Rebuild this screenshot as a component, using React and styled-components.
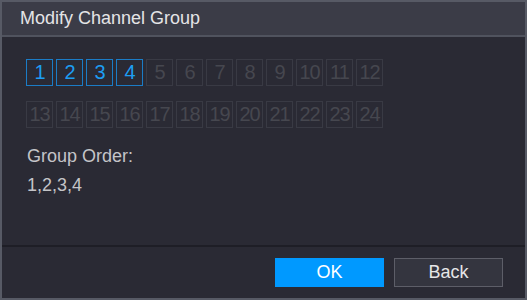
import React from 'react'
import styled, { createGlobalStyle } from 'styled-components';

const Global = createGlobalStyle`
  body {
    margin: 0;
    background: #2a2a34;
    font-family: "Liberation Sans", Arial, sans-serif;
  }
`;

const channels = Array.from({ length: 24 }, (_, i) => i + 1);
const selected = [1, 2, 3, 4];

export default function App() {
  return (
    <>
      <Global />
      <Dialog>
        <TitleBar>Modify Channel Group</TitleBar>
        <Body>
          <Grid>
            {channels.map(n => (
              <Cell key={n} $active={selected.includes(n)}>{n}</Cell>
            ))}
          </Grid>
          <Label>Group Order:</Label>
          <Order>{selected.join(',')}</Order>
        </Body>
        <Footer>
          <Button $primary>OK</Button>
          <Button>Back</Button>
        </Footer>
      </Dialog>
    </>
  )
}

const Dialog = styled.div`
  box-sizing: border-box;
  width: 527px;
  height: 300px;
  border: 2px solid #575a65;
  background: #2a2a34;
  display: flex;
  flex-direction: column;
`;

const TitleBar = styled.div`
  height: 33px;
  background: #3b3c47;
  border-bottom: 2px solid #50535e;
  color: #e4e4e6;
  font-size: 18px;
  line-height: 33px;
  padding-left: 18px;
`;

const Body = styled.div`
  flex: 1;
  padding: 22px 0 0 24px;
  border-bottom: 2px solid #1e1e26;
`;

const Grid = styled.div`
  display: grid;
  grid-template-columns: repeat(12, 27px);
  grid-auto-rows: 27px;
  column-gap: 3px;
  row-gap: 15px;
`;

const Cell = styled.div`
  box-sizing: border-box;
  border: 1px solid ${p => p.$active ? '#1b7cc6' : '#393a44'};
  color: ${p => p.$active ? '#1d9df2' : '#46474f'};
  font-size: 20px;
  display: flex;
  align-items: center;
  justify-content: center;
  letter-spacing: -1px;
`;

const Label = styled.div`
  margin-top: 17px;
  color: #c4c4c8;
  font-size: 18px;
  line-height: 22px;
  padding-left: 1px;
`;

const Order = styled.div`
  margin-top: 7px;
  color: #c4c4c8;
  font-size: 18px;
  line-height: 22px;
  padding-left: 1px;
`;

const Footer = styled.div`
  height: 51px;
  display: flex;
  justify-content: flex-end;
  align-items: flex-start;
  gap: 10px;
  padding: 11px 22px 0 0;
  box-sizing: border-box;
`;

const Button = styled.button`
  box-sizing: border-box;
  width: 109px;
  height: 29px;
  font-family: inherit;
  font-size: 18px;
  color: ${p => p.$primary ? '#ffffff' : '#e6e6e8'};
  background: ${p => p.$primary ? '#0099ff' : '#34353f'};
  border: ${p => p.$primary ? 'none' : '1px solid #5d5e68'};
  padding: 0;
`;
